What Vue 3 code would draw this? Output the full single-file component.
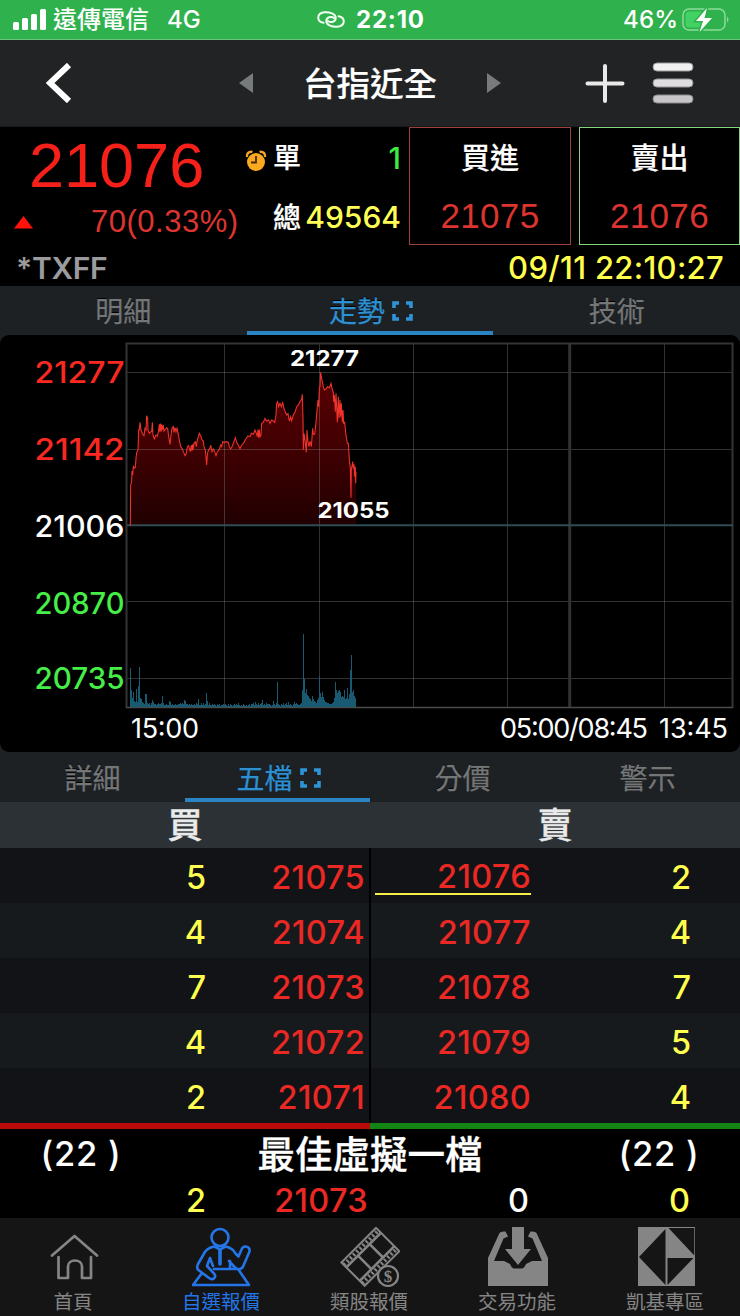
<script setup>
const orders = [
  [5, 21075, 21076, 2],
  [4, 21074, 21077, 4],
  [7, 21073, 21078, 7],
  [4, 21072, 21079, 5],
  [2, 21071, 21080, 4],
]

const columns = [224.5, 319.5, 413.5, 507.5, 664.5]
const rows = [372.5, 449.5, 601.5, 678.5]

/* Intraday price, in thirds of a pixel from the plot origin */
const price =
  '31,572 32,450 35,440 36,408 38,420 40,392 42,400 46,398 48,370 50,352 54,345 56,285 58,285 60,262 63,285 68,298 72,302 75,280 78,285 80,242 83,250 84,285 88,295 92,290 95,290 97,262 99,300 103,312 108,300 112,303 116,285 118,268 119,290 121,266 123,290 125,268 127,285 130,270 132,288 135,285 140,278 143,280 146,305 150,328 153,300 156,280 160,275 162,292 165,278 168,290 171,280 174,292 178,315 182,335 186,340 190,350 195,362 199,355 202,335 206,332 211,350 214,330 216,348 218,328 220,343 222,325 226,320 229,335 232,315 238,295 243,305 246,315 250,318 252,335 256,345 260,390 262,360 265,345 270,340 272,330 276,350 280,342 284,350 288,362 292,350 297,345 302,330 305,335 308,320 314,322 320,320 325,322 328,335 332,342 336,335 341,322 346,308 350,322 355,330 360,341 365,330 372,322 377,312 384,303 390,305 394,295 400,298 405,285 409,295 412,305 414,284 416,308 418,284 420,305 423,300 425,265 430,262 435,250 440,258 446,255 450,265 455,255 460,258 464,262 468,240 470,205 473,200 476,215 480,205 484,215 488,203 492,220 496,232 500,240 504,236 508,258 512,245 515,257 520,240 525,232 530,215 535,210 540,200 545,192 547,178 549,250 550,345 552,295 556,322 559,352 561,285 564,320 567,335 570,318 574,335 578,280 580,298 584,298 588,262 592,215 594,195 596,215 598,158 600,155 602,112 604,125 606,135 610,155 613,165 618,162 622,155 628,158 633,145 636,160 640,172 641,200 643,180 646,230 648,175 650,215 652,262 655,185 657,250 660,195 662,245 664,205 667,262 669,225 671,265 674,262 678,300 682,325 685,325 688,375 691,400 693,488 694,405 698,380 700,400 702,388 704,425 706,395 707,445 708,410'

/* Volume bar heights, one per pixel from x = 130 */
const volume = [
  39, 17, 9, 15, 6, 5, 18, 5, 21, 40, 9, 8, 5, 4, 3, 13, 13, 4, 3, 4, 2, 4, 7, 5, 3, 3, 2, 3, 4, 3,
  3, 4, 11, 4, 2, 2, 3, 2, 2, 6, 5, 2, 3, 2, 2, 3, 2, 2, 3, 3, 4, 3, 4, 3, 7, 6, 3, 3, 2, 3,
  2, 3, 2, 2, 3, 2, 4, 3, 8, 2, 2, 4, 2, 4, 2, 3, 14, 6, 2, 4, 2, 2, 3, 2, 3, 2, 1, 3, 2, 3,
  1, 2, 2, 3, 2, 3, 2, 1, 3, 1, 3, 2, 1, 2, 3, 2, 3, 2, 4, 2, 1, 2, 1, 3, 2, 1, 2, 1, 2, 3,
  1, 3, 3, 4, 2, 5, 3, 2, 4, 2, 3, 4, 7, 2, 3, 2, 4, 3, 3, 3, 2, 1, 2, 6, 3, 2, 4, 25, 3, 2,
  1, 3, 2, 4, 2, 3, 4, 2, 5, 2, 3, 2, 1, 3, 5, 3, 4, 3, 2, 2, 3, 4, 17, 73, 28, 14, 18, 12, 11, 9,
  8, 6, 11, 8, 6, 5, 4, 7, 9, 31, 14, 10, 15, 10, 7, 5, 5, 4, 4, 3, 3, 3, 4, 5, 9, 25, 17, 14, 16, 17,
  15, 10, 11, 10, 17, 8, 9, 19, 8, 13, 37, 52, 15, 17, 11, 9,
]
const volumePath = volume.map((h, i) => `M${130.5 + i} 707V${707 - h}`).join('')

const ticks = [
  [21277, 383, 'up'],
  [21142, 460, 'up'],
  [21006, 537, 'flat'],
  [20870, 614, 'down'],
  [20735, 689, 'down'],
]
</script>

<template>
  <div class="screen">
    <header class="status">
      <svg class="signal" width="34" height="22" viewBox="0 0 34 22" fill="#fff">
        <rect x="0" y="13" width="6" height="8" rx="1.5" />
        <rect x="9" y="9" width="6" height="12" rx="1.5" />
        <rect x="18" y="5" width="6" height="16" rx="1.5" />
        <rect x="27" y="0" width="6" height="21" rx="1.5" />
      </svg>
      <span class="carrier">遠傳電信</span>
      <span class="network">4G</span>
      <svg class="link" width="28" height="17" viewBox="0 0 28 17" fill="none" stroke="#f1fff1" stroke-width="2" stroke-linecap="round">
        <path d="M6.500 11.800C-.8 10.500-.5 2 7.500 1.300c5-.4 11.200 1.500 11.200 5.700 0 4-5 5-7.700 3" />
        <path d="M21.500 5.200C28.800 6.500 28.500 15 20.500 15.700c-5 .4-11.200-1.500-11.200-5.700 0-4 5-5 7.700-3" />
      </svg>
      <b class="clock">22:10</b>
      <span class="percent">46%</span>
      <svg class="battery" width="48" height="26" viewBox="0 0 48 26">
        <rect x="1" y="2" width="42" height="21" rx="6" fill="none" stroke="#8ddb98" stroke-width="1.500" />
        <rect x="3.500" y="4.500" width="18" height="16" rx="3.500" fill="#42d263" />
        <path d="M45 9.500q3 3 0 6z" fill="#8ddb98" />
        <path d="M25 1 14 14h7l-3.500 11L30 11h-7.500z" fill="#fff" stroke="#2fb14d" stroke-width="3" paint-order="stroke" />
      </svg>
    </header>

    <nav class="topbar">
      <svg class="back" width="26" height="40" viewBox="0 0 26 40" fill="none" stroke="#fff" stroke-width="6"><path d="M23 2 4 20l19 18" /></svg>
      <svg class="prev" width="15" height="22" viewBox="0 0 15 22"><path d="M0 11 14 1v20z" fill="#777b7c" /></svg>
      <h1>台指近全</h1>
      <svg class="next" width="15" height="22" viewBox="0 0 15 22"><path d="M14 11 0 1v20z" fill="#777b7c" /></svg>
      <svg class="plus" width="40" height="40" viewBox="0 0 40 40" stroke="#e9e9e9" stroke-width="4" stroke-linecap="round"><path d="M2.500 20.500h35M20 3v35" /></svg>
      <svg class="menu" width="42" height="42" viewBox="0 0 42 42">
        <rect x="1" y="1" width="40" height="8" rx="4" fill="#f2f1f2" stroke="#9b9b9b" />
        <rect x="1" y="17" width="40" height="8" rx="4" fill="#dfdddf" stroke="#979797" />
        <rect x="1" y="33" width="40" height="8" rx="4" fill="#c7c5c7" stroke="#8a8a8a" />
      </svg>
    </nav>

    <section class="quote">
      <div class="last">
        <div class="last-price">21076</div>
        <div class="change">
          <svg width="19" height="13" viewBox="0 0 19 13"><path d="M9.500 0 19 12.500H0z" fill="#ff120b" /></svg>
          <span>70(0.33%)</span>
        </div>
      </div>
      <div class="volumes">
        <div class="vol">
          <svg class="alarm" width="22" height="22" viewBox="0 0 22 22">
            <g fill="none" stroke="#f0a42c" stroke-width="2.400" stroke-linecap="round"><path d="M2 6Q2 2 6.500 1.800M15.500 1.800Q20 2 20 6" /></g>
            <circle cx="11" cy="12" r="9" fill="#fba91f" />
            <path d="M11 6v6.500H6" fill="none" stroke="#4b2a00" stroke-width="1.800" />
          </svg>
          <span class="label">單</span><span class="one">1</span>
        </div>
        <div class="vol"><span class="label">總</span><span class="total">49564</span></div>
      </div>
      <div class="side buy"><b>買進</b><span>21075</span></div>
      <div class="side sell"><b>賣出</b><span>21076</span></div>
      <div class="code">*TXFF</div>
      <div class="stamp">09/11 22:10:27</div>
    </section>

    <div class="tabs three">
      <div class="tab">明細</div>
      <div class="tab on">走勢<svg width="21" height="20" viewBox="0 0 21 20" fill="none" stroke="#2e94d8" stroke-width="3.600"><path d="M2 7V2h5M14 2h5v5M19 13v5h-5M7 18H2v-5" /></svg></div>
      <div class="tab">技術</div>
    </div>

    <div class="chart">
      <svg width="740" height="417" viewBox="0 335 740 417">
        <defs>
          <linearGradient id="fill" x1="0" y1="0" x2="0" y2="1">
            <stop offset="0" stop-color="#5a0003" /><stop offset=".5" stop-color="#400002" /><stop offset="1" stop-color="#200001" />
          </linearGradient>
        </defs>
        <g transform="translate(120 335) scale(.33333)">
          <polygon :points="price + ' 708,572'" fill="url(#fill)" />
        </g>
        <g fill="none" stroke="#8d9393" stroke-opacity=".34">
          <path v-for="x in columns" :key="x" :d="`M${x} 343V708`" />
          <path v-for="y in rows" :key="y" :d="`M127 ${y}H732`" />
        </g>
        <path d="M126.500 708V343.500H732.500V708" fill="none" stroke="#333435" stroke-width="2" />
        <path d="M569.700 343V708" stroke="#303233" stroke-width="3" />
        <path d="M126 707.500H733" stroke="#4a4c4c" stroke-width="1.500" />
        <path d="M127 525.300H733" stroke="#2f4c55" stroke-width="2" />
        <g transform="translate(120 335) scale(.33333)">
          <polyline :points="price" fill="none" stroke="#f0322b" stroke-width="3.200" />
        </g>
        <path :d="volumePath" stroke="#195a73" stroke-width="1" />
        <g class="axis">
          <text v-for="[v, y, tone] in ticks" :key="v" x="34.500" :y="y" textLength="90" lengthAdjust="spacingAndGlyphs" :class="tone">{{ v }}</text>
        </g>
        <g class="marks">
          <text x="290" y="366" textLength="69" lengthAdjust="spacingAndGlyphs">21277</text>
          <text x="317.500" y="517.500" textLength="72" lengthAdjust="spacingAndGlyphs">21055</text>
        </g>
        <g class="times">
          <text x="131" y="737.500" textLength="68">15:00</text>
          <text x="500" y="737.500" textLength="148">05:00/08:45</text>
          <text x="659" y="737.500" textLength="69">13:45</text>
        </g>
      </svg>
    </div>

    <div class="tabs four">
      <div class="tab">詳細</div>
      <div class="tab on">五檔<svg width="21" height="20" viewBox="0 0 21 20" fill="none" stroke="#2e94d8" stroke-width="3.600"><path d="M2 7V2h5M14 2h5v5M19 13v5h-5M7 18H2v-5" /></svg></div>
      <div class="tab">分價</div>
      <div class="tab">警示</div>
    </div>

    <div class="heads"><b>買</b><b>賣</b></div>
    <div class="book">
      <div v-for="(o, i) in orders" :key="i" class="order">
        <span class="qty">{{ o[0] }}</span><span class="bid">{{ o[1] }}</span>
        <span class="ask" :class="{ hit: i === 0 }">{{ o[2] }}</span><span class="qty askq">{{ o[3] }}</span>
      </div>
    </div>
    <div class="ratio"><i></i><i></i></div>

    <section class="virtual">
      <div class="sum"><span>(22 )</span><b>最佳虛擬一檔</b><span>(22 )</span></div>
      <div class="best"><span class="y">2</span><span class="r">21073</span><span>0</span><span class="y">0</span></div>
    </section>

    <footer class="dock">
      <div class="item">
        <svg width="60" height="60" viewBox="0 0 60 60" fill="none" stroke="#858585" stroke-width="2.700" stroke-linecap="round" stroke-linejoin="round">
          <path d="M8 28.500 30.500 9 53 28.500M14.500 30v21h9.500V39.500c0-8 14-8 14 0V51H47V30" />
        </svg>
        <span>首頁</span>
      </div>
      <div class="item active">
        <svg width="60" height="60" viewBox="0 0 60 60" fill="none" stroke="#2476e8" stroke-width="2.600" stroke-linecap="round" stroke-linejoin="round">
          <circle cx="28" cy="10.500" r="8.500" />
          <path d="M22.500 19.500c-6 1-9 3-11 8L6 37c-1.500 3-1 5 1 6.500l10 7.500c4 3 8-1 5-4.500L15 39l3-8M33.500 19.500c5 1 8 3 10 7l3 3 3-7c2-5 9-3 8 2l-6 14c-1.500 4-5.500 5-8.500 2L37 34M22 42h16V34M18 31l3 8M22.500 19.500l5.500 3 5.500-3M25 42h21l11 16H1l9-12" />
          <path d="M28 23V37" stroke-width="3.600" />
        </svg>
        <span>自選報價</span>
      </div>
      <div class="item">
        <svg width="60" height="60" viewBox="0 0 60 60" fill="none" stroke="#858585">
          <g transform="translate(36 .8) rotate(45)">
            <path d="M0 0H33V49H0z" stroke-width="2" />
            <path d="M7 0V49M26 0V49M7 16H26M7 32.500H26" stroke-width="2.500" />
            <path d="M3.500 2V49M29.500 2V49" stroke-width="4" stroke-dasharray="2 2.500" />
          </g>
          <circle cx="48" cy="49" r="10" fill="#151515" stroke-width="2.200" />
          <text x="48" y="55" text-anchor="middle" class="dollar">$</text>
        </svg>
        <span>類股報價</span>
      </div>
      <div class="item">
        <svg width="60" height="60" viewBox="0 0 60 60" fill="#858585">
          <path d="M0 31 11.500 6q1-2 6-1.500l2.500 5-4.500 2L6 34H16l6 3c1 2 2 4.500 4 4.500h8c2 0 3-2.500 4-4.500l6-3h10L44.500 11.500l-4.500-2 2.500-5q5-.5 6 1.500L60 31v28H0z" />
          <path d="M24 0H36V22h7L30 38 17 22h7z" stroke="#151515" stroke-width="1" paint-order="stroke" />
        </svg>
        <span>交易功能</span>
      </div>
      <div class="item">
        <svg width="60" height="60" viewBox="0 0 60 60">
          <path d="M2 0H59V59H2z" fill="#858585" />
          <path d="M29.500 2v56L3 30zM31.500 31h26L31.500 58zM32.500 1H58.300V28.500z" fill="#151515" />
        </svg>
        <span>凱基專區</span>
      </div>
    </footer>
  </div>
</template>

<style>
html, body { background: #000; overflow: hidden; }
</style>

<style scoped>
* { box-sizing: border-box; }
.screen { width: 740px; height: 1316px; background: #000; color: #fff; font-family: Inter, "Noto Sans CJK TC", sans-serif; overflow: hidden; white-space: nowrap; }
svg { display: block; flex: none; }

.status { height: 40px; background: #2fb14d; border-bottom: 1px solid #6cc17f; display: flex; align-items: center; padding-left: 13px; font-weight: 500; }
.carrier { margin-left: 6px; font-size: 24px; line-height: 42px; font-weight: 500; width: 114px; }
.network { font-size: 24px; width: 150px; }
.link { width: 28px; }
.clock { font-size: 24px; margin-left: 11px; letter-spacing: .8px; width: 267px; font-weight: 700; }
.percent { font-size: 24px; letter-spacing: .2px; width: 60px; }
.battery { margin-left: -1px; }

.topbar { height: 87px; background: #222324; display: flex; align-items: center; padding-left: 46px; border-bottom: 1px solid #171819; }
.back { margin-top: -1px; }
.prev { margin-left: 167px; margin-top: -1px; }
h1 { margin: 2px 0 0 49px; width: 184px; font-size: 33.500px; line-height: 60px; font-weight: 500; -webkit-text-stroke: .2px; }
.next { margin-top: -1px; }
.plus { margin-left: 83px; }
.menu { margin-left: 27px; margin-top: -1px; }

.quote { height: 159px; display: grid; grid-template-columns: 237px 156px 162px 161px; grid-template-rows: 118px 41px; column-gap: 8px; }
.last-price { font: 63px/76px "Liberation Sans", sans-serif; color: #f6201a; padding-left: 29px; height: 75px; }
.change { display: flex; align-items: center; height: 40px; font: 31px/42px "Liberation Sans", sans-serif; color: #dc3531; padding-left: 14px; }
.change span { margin-left: 58px; letter-spacing: .5px; }
.volumes { padding-top: 1px; display: grid; grid-template-rows: 59px 60px; }
.vol { display: flex; align-items: center; justify-content: flex-end; font-size: 30px; font-weight: 500; }
.vol .label { font-size: 28px; width: 29px; line-height: 40px; -webkit-text-stroke: .2px; }
.vol + .vol .label { padding-top: 1px; }
.one { width: 99px; text-align: right; color: #3fea43; }
.alarm { margin: 6px 6px 0 0; }
.total { width: 99px; color: #ffff55; text-align: right; }
.side { border: 1px solid; display: grid; grid-template-rows: 62px 52px; justify-items: center; align-items: center; line-height: 40px; }
.side b { color: #fff; font-size: 29px; font-weight: 500; -webkit-text-stroke: .2px; }
.side span { color: #dc3430; font: 35px/40px "Liberation Sans", sans-serif; letter-spacing: .3px; }
.buy { border-color: #a0403c; }
.sell { border-color: #82d77f; }
.code { color: #9b9b9e; font-size: 30px; line-height: 46px; font-weight: 600; padding-left: 16px; letter-spacing: -.3px; }
.stamp { grid-column: 2 / 5; text-align: right; padding-right: 16px; font-size: 31px; letter-spacing: .3px; line-height: 46px; font-weight: 500; color: #ffff4c; }

.tabs { display: grid; background: #1d2124; height: 49px; }
.three { grid-template-columns: repeat(3, 1fr); }
.four { grid-template-columns: repeat(4, 1fr); height: 49px; }
.tab { height: 49px; display: flex; justify-content: center; align-items: center; gap: 7px; font-size: 28px; line-height: 38px; padding-top: 7px; color: #747677; border-bottom: 4px solid transparent; text-shadow: 0 -1px #000; -webkit-text-stroke: .3px; }
.tab svg { margin-top: -3px; }
.tab.on { color: #2e90d1; border-color: #2b85c2; padding-left: 2px; }

.chart { height: 418px; background: #1d2124; }
.chart svg { background: #000; border-radius: 9px; }
.axis { font-size: 30px; font-weight: 500; }
.up { fill: #f82920; }
.flat { fill: #fff; }
.down { fill: #46ee48; }
.marks { font-size: 21px; font-weight: 700; fill: #fff; }
.times { font-size: 27px; fill: #fff; }

.heads { height: 46px; background: #2b3134; display: grid; grid-template-columns: 1fr 1fr; text-align: center; font-size: 35px; line-height: 46px; color: #e9eaea; }
.heads b { font-weight: 500; -webkit-text-stroke: .4px; }
.book { height: 275px; }
.order { height: 55px; display: grid; grid-template-columns: 206px 159px 166px 160px; align-items: center; text-align: right; font-size: 32.500px; font-weight: 500; background: #121316; line-height: 36px; padding-top: 4px; background-image: linear-gradient(#000, #000); background-size: 2px 100%; background-position: 369px 0; background-repeat: no-repeat; }
.order:nth-child(even) { background-color: #171a1d; }
.qty { color: #ffff4f; }
.bid, .ask { color: #ea2824; letter-spacing: .3px; }
.hit { justify-self: end; width: 156px; border-bottom: 2px solid #f6ef49; line-height: 34px; height: 35px; }
.ratio { height: 6px; display: grid; grid-template-columns: 1fr 1fr; }
.ratio i { background: #b90a0a; }
.ratio i + i { background: #138515; }

.virtual { height: 89px; font-weight: 500; }
.sum { display: grid; grid-template-columns: 162px 1fr 162px; text-align: center; font-size: 34.500px; line-height: 50px; height: 52px; }
.sum span { letter-spacing: .8px; }
.sum b { font-size: 37.500px; font-weight: 500; line-height: 52px; -webkit-text-stroke: .3px; }
.best { display: grid; grid-template-columns: 206px 162px 161px 161px; text-align: right; font-size: 32.500px; line-height: 39px; }
.y { color: #ffff4f; }
.r { color: #ea2824; letter-spacing: .3px; }

.dock { height: 98px; background: #151515; display: grid; grid-template-columns: repeat(5, 1fr); padding-top: 9px; }
.item { display: flex; flex-direction: column; align-items: center; color: #858585; font-size: 19.500px; line-height: 30px; }
.item span { margin-left: -2px; }
.active { color: #2476e8; }
.dollar { font: bold 17px "Liberation Serif", serif; fill: #858585; stroke: none; }
</style>
